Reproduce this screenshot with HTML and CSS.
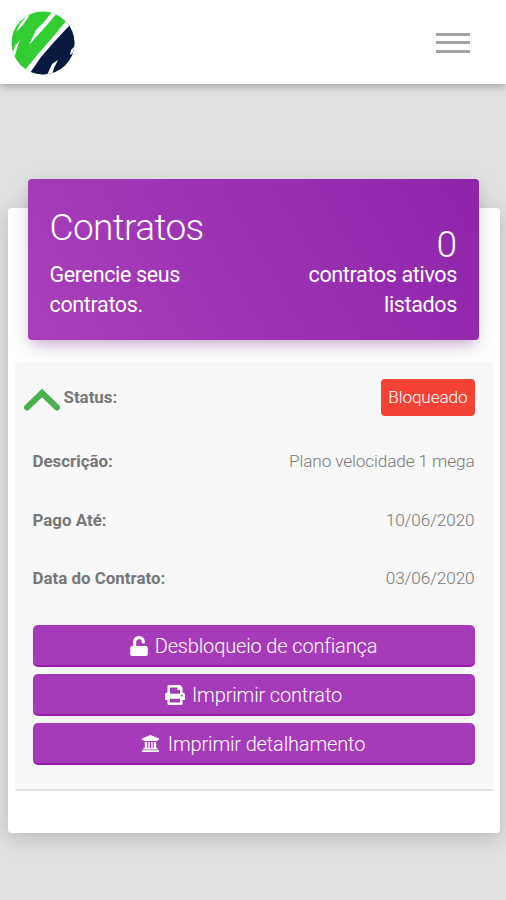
FILE: index.html
```
<!DOCTYPE html>
<html lang="pt-BR">
<head>
  <meta charset="UTF-8">
  <meta name="viewport" content="width=device-width, initial-scale=1.0">
  <title>Contratos</title>
  <link rel="stylesheet" href="styles.css">
</head>
<body>
  <header class="navbar">
    <svg class="logo" viewBox="0 0 64 64">
      <defs>
        <clipPath id="circle"><circle cx="32" cy="32" r="31.5"/></clipPath>
      </defs>
      <g clip-path="url(#circle)">
        <rect width="64" height="64" fill="#32cd32"/>
        <path d="M57 14 L44 29 L30 44 L19 61 V64 H64 V14 Z" fill="#09183f"/>
        <path d="M55 10 L42 26 L27 43 L14 59 L19 62 L30 46 L44 30 L58 15 Z" fill="#fff"/>
        <path d="M42 0 L33 11 L25 19 L18 34 L26 25 L36 14 L46 2 Z" fill="#fff"/>
        <path d="M17 3 L9 13 L5 21 L12 14 L18 5 Z" fill="#fff"/>
        <path d="M9 29 L4 35 L1 43 L4 45 L6 37 Z" fill="#fff"/>
        <path d="M47 49 L41 53 L36 64 H41 L43 57 Z" fill="#fff"/>
        <path d="M64 35 L60 39 L59 44 L62 42 Z" fill="#fff"/>
      </g>
    </svg>
    <div class="toggler">
      <span></span>
      <span></span>
      <span></span>
    </div>
  </header>

  <main class="card">
    <div class="card-header">
      <div>
        <h4>Contratos</h4>
        <p>Gerencie seus<br>contratos.</p>
      </div>
      <div class="total">
        <h4>0</h4>
        <p>contratos ativos<br>listados</p>
      </div>
    </div>

    <div class="contract">
      <div class="row row-status">
        <svg class="chevron" viewBox="0 0 36 24">
          <path d="M3 19.500 L18 5 L33 19.500" fill="none" stroke="#4caf50" stroke-width="6" stroke-linecap="round"/>
        </svg>
        <strong>Status:</strong>
        <span class="badge">Bloqueado</span>
      </div>
      <div class="row">
        <strong>Descrição:</strong>
        <span>Plano velocidade 1 mega</span>
      </div>
      <div class="row">
        <strong>Pago Até:</strong>
        <span>10/06/2020</span>
      </div>
      <div class="row">
        <strong>Data do Contrato:</strong>
        <span>03/06/2020</span>
      </div>

      <div class="actions">
        <button type="button">
          <svg class="icon-lock" viewBox="0 0 448 512"><path fill="currentColor" d="M400 256H152V152.9c0-39.6 31.7-72.5 71.300-72.900 40-.4 72.700 32.100 72.700 72v16c0 13.300 10.700 24 24 24h32c13.300 0 24-10.700 24-24v-16C376 68 307.500-.3 223.500 0 139.500.3 72 69.500 72 153.500V256H48c-26.500 0-48 21.500-48 48v160c0 26.500 21.500 48 48 48h352c26.500 0 48-21.500 48-48V304c0-26.500-21.500-48-48-48z"/></svg>
          <span>Desbloqueio de confiança</span>
        </button>
        <button type="button">
          <svg class="icon-print" viewBox="0 0 512 512"><path fill="currentColor" d="M448 192V77.250c0-8.490-3.370-16.620-9.370-22.630L393.370 9.370c-6-6-14.140-9.370-22.630-9.370H96C78.330 0 64 14.330 64 32v160c-35.350 0-64 28.650-64 64v112c0 8.840 7.160 16 16 16h48v96c0 17.670 14.330 32 32 32h320c17.670 0 32-14.330 32-32v-96h48c8.840 0 16-7.160 16-16V256c0-35.350-28.650-64-64-64zm-64 256H128v-96h256v96zm0-224H128V64h192v48c0 8.840 7.160 16 16 16h48v96zm48 72c-13.250 0-24-10.750-24-24 0-13.260 10.750-24 24-24s24 10.740 24 24c0 13.250-10.750 24-24 24z"/></svg>
          <span>Imprimir contrato</span>
        </button>
        <button type="button">
          <svg class="icon-bank" viewBox="0 0 24 24"><path fill="currentColor" d="M12 0 L24 5 V7 H22 V8.500 H2 V7 H0 V5 Z M4 10 H7.500 V18.500 H9 V10 H11 V18.500 H13 V10 H15 V18.500 H16.500 V10 H20 V18.500 H22 V20.500 H2 V18.500 H4 Z M0 21.500 H24 V24 H0 Z"/></svg>
          <span>Imprimir detalhamento</span>
        </button>
      </div>
    </div>
  </main>
</body>
</html>
```
FILE: styles.css
```
body {
  margin: 0;
  min-height: 900px;
  background-color: #e1e1e1;
  font-family: Roboto, sans-serif;
  font-weight: 300;
  color: #777;
}

.navbar {
  display: flex;
  justify-content: space-between;
  align-items: center;
  height: 84px;
  padding: 1px 36px 0 11px;
  box-sizing: border-box;
  background-color: #fff;
  box-shadow: 0 2px 8px rgba(0, 0, 0, 0.3);
}

.logo {
  width: 64px;
  height: 64px;
}

.toggler {
  display: flex;
  flex-direction: column;
  gap: 5.500px;
  width: 34px;
}

.toggler span {
  height: 3px;
  background-color: #a3a3a3;
}

.card {
  width: 492px;
  height: 625px;
  margin: 123.500px 0 0 7.500px;
  padding: 0 7px;
  box-sizing: border-box;
  display: flow-root;
  background-color: #fff;
  border-radius: 4px;
  box-shadow: 0 5px 20px rgba(0, 0, 0, 0.18);
}

.card-header {
  display: flex;
  justify-content: space-between;
  height: 161px;
  margin: -28.500px 14px 0 13.500px;
  padding: 24.500px 21.500px 0;
  box-sizing: border-box;
  color: #fff;
  background: linear-gradient(60deg, #a83fba, #8e24aa);
  border-radius: 4px;
  box-shadow: 0 6px 22px rgba(0, 0, 0, 0.1), 0 8px 12px -4px rgba(156, 39, 176, 0.3);
}

.card-header h4 {
  margin: 0;
  font-size: 37px;
  font-weight: 300;
  line-height: 48px;
  letter-spacing: -0.600px;
}

.card-header p {
  margin: 8px 0 0;
  font-size: 21.500px;
  font-weight: 400;
  line-height: 30px;
  letter-spacing: -0.350px;
}

.total {
  padding-top: 26px;
  text-align: right;
}

.total h4 {
  line-height: 30px;
  letter-spacing: 0;
}

.total p {
  margin-top: 0;
}

.contract {
  height: 429px;
  margin-top: 22px;
  padding: 5px 18px 0;
  box-sizing: border-box;
  background-color: #f8f8f8;
  border-bottom: 2px solid #e3e3e3;
}

.row {
  display: flex;
  justify-content: space-between;
  align-items: center;
  height: 58.500px;
  font-size: 17.200px;
  letter-spacing: -0.120px;
}

.row strong {
  font-size: 16.900px;
  font-weight: 700;
  letter-spacing: 0;
}

.row-status {
  height: 60px;
  margin-left: -9px;
  padding-bottom: 5px;
}

.chevron {
  width: 36px;
  height: 24px;
  margin: 5px 4px 0 0;
}

.badge {
  margin-left: auto;
  padding: 0 7px;
  line-height: 37px;
  color: #fff;
  background-color: #f44336;
  border-radius: 4px;
}

.actions {
  display: flex;
  flex-direction: column;
  gap: 7px;
  margin-top: 17px;
}

.actions button {
  display: flex;
  justify-content: center;
  align-items: center;
  height: 42px;
  padding: 2px 0 0;
  border: none;
  border-bottom: 2px solid #9a1bad;
  border-radius: 5px;
  background-color: #a63bb9;
  color: #fff;
  font-family: inherit;
  font-size: 20px;
  font-weight: 300;
  letter-spacing: -0.150px;
}

.icon-lock {
  width: 18px;
  height: 20px;
  margin-right: 7px;
}

.icon-print {
  width: 20px;
  height: 20px;
  margin-right: 7px;
}

.icon-bank {
  width: 17px;
  height: 17px;
  margin-right: 9px;
}
```
